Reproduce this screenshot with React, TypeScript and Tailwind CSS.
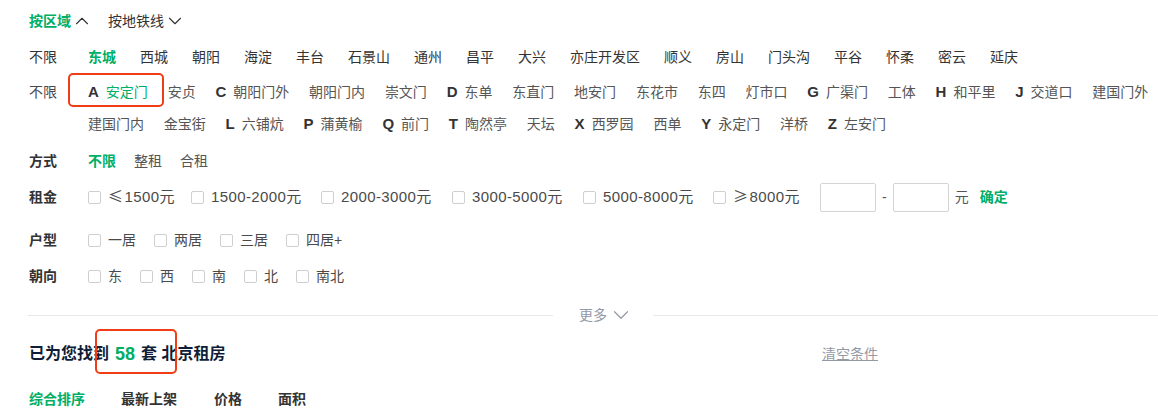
import React from "react";
import { ChevronUp, ChevronDown } from "lucide-react";

const FONT = { fontFamily: '"Liberation Sans", "Noto Sans CJK SC", sans-serif' };
const CJK = { fontFamily: '"Noto Sans CJK SC", sans-serif' };

const districts = ["东城", "西城", "朝阳", "海淀", "丰台", "石景山", "通州", "昌平", "大兴", "亦庄开发区", "顺义", "房山", "门头沟", "平谷", "怀柔", "密云", "延庆"];

const areas: [string, string][] = [
  ["A", "安定门"], ["", "安贞"], ["C", "朝阳门外"], ["", "朝阳门内"], ["", "崇文门"], ["D", "东单"], ["", "东直门"], ["", "地安门"], ["", "东花市"], ["", "东四"], ["", "灯市口"], ["G", "广渠门"], ["", "工体"], ["H", "和平里"], ["J", "交道口"], ["", "建国门外"],
  ["", "建国门内"], ["", "金宝街"], ["L", "六铺炕"], ["P", "蒲黄榆"], ["Q", "前门"], ["T", "陶然亭"], ["", "天坛"], ["X", "西罗园"], ["", "西单"], ["Y", "永定门"], ["", "洋桥"], ["Z", "左安门"],
];

function Box() {
  return <span className="w-[13px] h-[13px] shrink-0 border border-[#cfcfcf] rounded-[2px] mr-[7px] bg-white" />;
}

function Check({ label }: { label: string }) {
  return (
    <div className="flex items-center mr-[18px]">
      <Box />
      <span className="text-[14px] text-[#4a4a4a]">{label}</span>
    </div>
  );
}

function Price({ pre, label, w }: { pre?: string; label: string; w: string }) {
  return (
    <div className={`flex items-center ${w} whitespace-nowrap`}>
      <Box />
      <span className="text-[15px] tracking-[0.4px] text-[#4a4a4a]">
        {pre && <span style={CJK} className="mr-[1px]">{pre}</span>}
        {label}
      </span>
    </div>
  );
}

export default function App() {
  return (
    <div className="w-[1158px] h-[415px] bg-white overflow-hidden relative" style={FONT}>
      <div className="pl-[29px]">
        {/* Row 1 */}
        <div className="flex items-center h-[30px] mt-[6px]">
          <span className="text-[14px] font-bold text-[#00ae66]">按区域</span>
          <ChevronUp size={22} strokeWidth={1.2} className="text-[#333]" />
          <span className="text-[14px] text-[#333] ml-[15px]">按地铁线</span>
          <ChevronDown size={22} strokeWidth={1.2} className="text-[#333]" />
        </div>
        {/* Row 2 districts */}
        <div className="flex items-center h-[30px] mt-[6px]">
          <span className="w-[59px] text-[14px] text-[#333]">不限</span>
          {districts.map((d, i) => (
            <span key={d} className={`text-[14px] mr-[24px] ${i === 0 ? "text-[#00ae66] font-bold" : "text-[#333]"}`}>{d}</span>
          ))}
        </div>
        {/* Row 3/4 areas */}
        <div className="flex mt-[4px]">
          <span className="w-[59px] shrink-0 h-[32px] flex items-center text-[14px] text-[#4a4a4a]">不限</span>
          <div className="flex flex-wrap w-[1085px] shrink-0">
            {areas.map(([l, n], i) => (
              <span key={n} className="h-[32px] flex items-center mr-[19.8px] text-[14px]">
                {l && <span className="font-bold text-[#333] text-[15px] mr-[7px]">{l}</span>}
                <span className={i === 0 ? "text-[#00ae66]" : "text-[#555]"}>{n}</span>
              </span>
            ))}
          </div>
        </div>
        {/* 方式 */}
        <div className="flex items-center h-[30px] mt-[6px]">
          <span className="w-[59px] text-[14px] font-bold text-[#333]">方式</span>
          <span className="text-[14px] text-[#00ae66] font-bold mr-[18px]">不限</span>
          <span className="text-[14px] text-[#555] mr-[18px]">整租</span>
          <span className="text-[14px] text-[#555]">合租</span>
        </div>
        {/* 租金 */}
        <div className="flex items-center h-[30px] mt-[6px]">
          <span className="w-[59px] text-[14px] font-bold text-[#333]">租金</span>
          <Price pre="≤" label="1500元" w="w-[103px]" />
          <Price label="1500-2000元" w="w-[130px]" />
          <Price label="2000-3000元" w="w-[131px]" />
          <Price label="3000-5000元" w="w-[131px]" />
          <Price label="5000-8000元" w="w-[130px]" />
          <Price pre="≥" label="8000元" w="w-[107px]" />
          <span className="w-[56px] h-[29px] border border-[#d4d4d4] rounded-[2px]" />
          <span className="text-[14px] text-[#555] mx-[6px]">-</span>
          <span className="w-[56px] h-[29px] border border-[#d4d4d4] rounded-[2px]" />
          <span className="text-[14px] text-[#555] ml-[6px]">元</span>
          <span className="text-[14px] font-bold text-[#00ae66] ml-[11px]">确定</span>
        </div>
        {/* 户型 */}
        <div className="flex items-center h-[30px] mt-[13px]">
          <span className="w-[59px] text-[14px] font-bold text-[#333]">户型</span>
          <Check label="一居" />
          <Check label="两居" />
          <Check label="三居" />
          <Check label="四居+" />
        </div>
        {/* 朝向 */}
        <div className="flex items-center h-[30px] mt-[6px]">
          <span className="w-[59px] text-[14px] font-bold text-[#333]">朝向</span>
          <Check label="东" />
          <Check label="西" />
          <Check label="南" />
          <Check label="北" />
          <Check label="南北" />
        </div>
        {/* Divider */}
        <div className="flex items-center h-[20px] mt-[14px] -ml-[1px]">
          <div className="w-[525px] h-px bg-[#e8e8e8]" />
          <div className="w-[100px] flex items-center pl-[26px] text-[14px] text-[#9399a5]">
            <span>更多</span>
            <ChevronDown size={26} strokeWidth={1.1} className="ml-[1px]" />
          </div>
          <div className="flex-1 h-px bg-[#e8e8e8]" />
        </div>
        {/* Title */}
        <div className="flex items-center h-[30px] mt-[14px]">
          <div className="w-[793px] flex items-center text-[16px] font-bold text-[#101d37]">
            <span>已为您找到</span>
            <span className="text-[#00ae66] text-[18px] mx-[6px]">58</span>
            <span>套 北京租房</span>
          </div>
          <span className="text-[14px] text-[#9399a5] underline">清空条件</span>
        </div>
        {/* Sort */}
        <div className="flex items-center h-[30px] mt-[15px] text-[14px] font-bold">
          <span className="text-[#00ae66] mr-[36px]">综合排序</span>
          <span className="text-[#333] mr-[37px]">最新上架</span>
          <span className="text-[#333] mr-[36px]">价格</span>
          <span className="text-[#333]">面积</span>
        </div>
      </div>
      {/* Annotation boxes */}
      <div className="absolute left-[68px] top-[73px] w-[96px] h-[34px] border-2 border-[#f03d16] rounded-[5px]" />
      <div className="absolute left-[95px] top-[329px] w-[82px] h-[45px] border-2 border-[#f03d16] rounded-[5px]" />
    </div>
  );
}
